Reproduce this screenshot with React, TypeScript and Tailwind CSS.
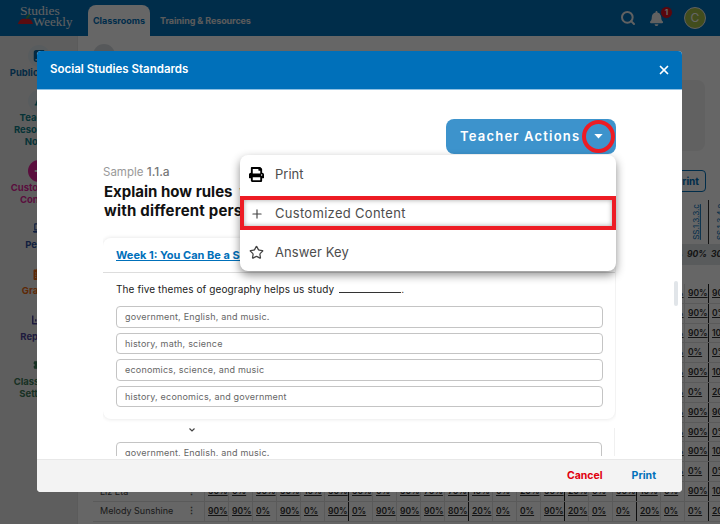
import React from "react";
import { FaPrint, FaBell, FaBook, FaFont, FaPlus, FaLaptop, FaCog, FaChartBar, FaClipboardList } from "react-icons/fa";
import { Plus, Star, X, Search } from "lucide-react";

const F = { fontFamily: "Inter, 'Liberation Sans', sans-serif" };

const fill = (tail: string[]) => [...Array(22 - tail.length).fill("90%"), ...tail];
const rows: { name: string; cells: string[] }[] = [
  ["90%", "90%"], ["90%", "0%"], ["90%", "10%"], ["0%", "0%"], ["90%", "10%"], ["0%", "20%"],
  ["90%", "90%"], ["90%", "0%"], ["90%", "10%"], ["0%", "0%"],
].map((t, i) => ({ name: "Student " + (i + 1), cells: fill(t) }));
rows.push({ name: "Liz Eta", cells: ["90%", "0%", "90%", "90%", "10%", "90%", "90%", "0%", "90%", "70%", "70%", "10%", "0%", "20%", "90%", "20%", "0%", "90%", "10%", "0%", "90%", "10%"] });
rows.push({ name: "Melody Sunshine", cells: ["90%", "90%", "0%", "90%", "0%", "90%", "0%", "90%", "90%", "90%", "80%", "20%", "0%", "0%", "90%", "20%", "0%", "0%", "20%", "0%", "0%", "20%"] });
const thick = new Set([6, 11, 15, 18, 21]);

const side = [
  { icon: <FaBook size={12} />, lines: ["Publications"], color: "text-[#0b6aa8]", mt: "mt-[9px]", circle: "bg-[#dde5ea]" },
  { icon: <FaFont size={10} />, lines: ["Teacher", "Resources", "Notes"], color: "text-[#0f7f88]", mt: "mt-[11px]", circle: "bg-[#dde5ea]" },
  { icon: <FaPlus size={10} />, lines: ["Customized", "Content"], color: "text-[#e0259a]", mt: "mt-[12px]", circle: "bg-[#e0259a] text-white" },
  { icon: <FaLaptop size={12} />, lines: ["Peers"], color: "text-[#2c4f9e]", mt: "mt-[11px]", circle: "" },
  { icon: <FaClipboardList size={12} />, lines: ["Grades"], color: "text-[#e8660f]", mt: "mt-[12px]", circle: "" },
  { icon: <FaChartBar size={12} />, lines: ["Reports"], color: "text-[#4f479c]", mt: "mt-[12px]", circle: "" },
  { icon: <FaCog size={12} />, lines: ["Classroom", "Settings"], color: "text-[#3d7a58]", mt: "mt-[11px]", circle: "" },
];

const answers = ["government, English, and music.", "history, math, science", "economics, science, and music", "history, economics, and government"];

function Option({ text }: { text: string }) {
  return (
    <div className="h-[21.5px] shrink-0 rounded border border-[#c4c4c4] flex items-center px-[8px] text-[9px] tracking-[0.2px] text-[#666]">
      {text}
    </div>
  );
}

export default function App() {
  return (
    <div style={F} className="relative w-[720px] h-[524px] overflow-hidden bg-white">
      {/* Page behind the dialog */}
      <header className="h-9 bg-[#0070ba] flex items-end pl-[18px]">
        <div className="relative w-[70px] h-[30px] self-center text-[#f2f2f2] leading-none" style={{ fontFamily: "'Liberation Serif', serif" }}>
          <span className="absolute left-[2px] top-[1px] text-[13.5px]">Studies</span>
          <span className="absolute left-[15px] top-[12px] text-[13px]">Weekly</span>
          <svg className="absolute left-0 top-[11px]" width="16" height="12" viewBox="0 0 16 12">
            <path d="M0 10C1 5 5 4 8 5c3-1 6 0 7 5Z" fill="#e0202a" />
            <path d="M8 5C8 3 9 1 12 0c0 2-1 4-4 5Z" fill="#4b9a3c" />
          </svg>
        </div>
        <div className="h-[31px] w-[62px] rounded-t-lg bg-white flex items-center justify-center text-[9px] font-bold text-[#0070ba]">
          Classrooms
        </div>
        <div className="ml-[10px] h-[31px] flex items-center text-[9px] font-bold text-[#e3e3e3] tracking-[-0.1px]">
          Training &amp; Resources
        </div>
        <div className="ml-auto self-center flex items-center pr-[14px]">
          <Search size={16} strokeWidth={3} className="text-[#f2f2f2] mr-[13px]" />
          <div className="relative mr-[20px]">
            <FaBell size={15} className="text-[#f2f2f2]" />
            <span className="absolute -top-[5px] -right-[9px] w-[13px] h-[13px] rounded-full bg-[#e0101f] border border-[#0070ba] text-white text-[8px] font-bold flex items-center justify-center">1</span>
          </div>
          <div className="w-[22px] h-[22px] rounded-full bg-[#a5c04a] border border-[#f0f0f0] flex items-center justify-center text-[12px] text-white">C</div>
        </div>
      </header>

      <div className="flex h-[488px]">
        <aside className="w-[78px] shrink-0 bg-[#ececec] border-r border-[#e4e4e4] flex flex-col items-center">
          {side.map((s) => (
            <div key={s.lines[0]} className={`flex flex-col items-center ${s.mt} ${s.color}`}>
              <div className={`w-[22px] h-[22px] rounded-full flex items-center justify-center ${s.circle}`}>{s.icon}</div>
              {s.lines.map((l) => (
                <div key={l} className="text-[9.5px] font-bold leading-[12px] whitespace-nowrap">{l}</div>
              ))}
            </div>
          ))}
        </aside>
        <main className="flex-1 min-w-0 bg-white pl-[15px]">
          <div className="flex items-start h-[134px] pt-[8px]">
            <div className="w-[22px] h-[22px] rounded-full bg-[#d8dde2]" />
            <div className="ml-auto mt-[36px] w-[590px] h-[71px] mr-[15px] rounded-lg bg-[#f2f2f2]" />
          </div>
          <div className="flex justify-end h-[30px] pr-[14px]">
            <div className="h-[22px] w-[58px] rounded border border-[#0070ba] text-[#0070ba] text-[10px] font-bold flex items-center justify-end pr-[6px]">Print</div>
          </div>
          {/* Score table */}
          <div className="w-[640px] text-[#333]">
            <div className="flex h-[44px] ml-[111px]">
              {Array.from({ length: 22 }, (_, i) => (
                <div key={i} className={`w-6 shrink-0 flex items-center justify-center ${thick.has(i) ? "border-l border-l-[#333]" : ""}`}>
                  <span className="block -rotate-90 text-[8px] whitespace-nowrap underline text-[#0070ba]">{i === 20 ? "SS.1.3.3.c" : i === 21 ? "SS.1.3.4.e" : "SS.1.1.1.a"}</span>
                </div>
              ))}
            </div>
            <div className="flex h-[21px] ml-[111px] bg-[#dfe3e6]">
              {Array.from({ length: 22 }, (_, i) => (
                <div key={i} className="w-6 shrink-0 flex items-center pl-[3px] text-[8.5px] font-bold italic">{i === 21 ? "30%" : "90%"}</div>
              ))}
            </div>
            <div className="h-[19px]" />
            {rows.map((r) => (
              <div key={r.name} className="flex h-[19.8px] border-b border-[#e2e2e2]">
                <div className="w-[111px] shrink-0 flex items-center pl-[7px] text-[9px] text-[#444]">
                  <span className="flex-1">{r.name}</span>
                  <span className="pr-[8px] font-bold text-[#555]">⋮</span>
                </div>
                {r.cells.map((c, i) => (
                  <div key={i} className={`w-6 shrink-0 flex items-center pl-[3px] text-[8.5px] font-semibold underline border-l ${thick.has(i) ? "border-l-[#222]" : "border-l-[#e2e2e2]"}`}>{c}</div>
                ))}
              </div>
            ))}
          </div>
        </main>
      </div>

      {/* Dim layer */}
      <div className="absolute inset-0 bg-[rgba(0,0,0,0.6)]" />

      {/* Dialog */}
      <div className="absolute left-[37px] top-[51px] w-[645px] h-[441px] bg-white rounded-[4px] flex flex-col overflow-hidden">
        <div className="h-[39px] shrink-0 bg-[#0070ba] border-b border-[#8fc1e3] flex items-center justify-between pl-[13px] pr-[11px] text-white">
          <span className="text-[11.5px] font-semibold">Social Studies Standards</span>
          <X size={14} strokeWidth={3} />
        </div>
        <div className="relative flex-1 min-h-0 px-[66px] overflow-hidden">
          <div className="h-[366px] overflow-hidden">
            <div className="pt-[75px] text-[11.5px] leading-[14px] text-[#999]">
              Sample <span className="text-[12px] font-medium text-[#777]">1.1.a</span>
            </div>
            <div className="mt-[3px] pl-[1px] text-[15px] font-bold leading-[19px] text-[#111] whitespace-nowrap">
              <div>Explain how rules&nbsp;&nbsp;work</div>
              <div className="tracking-[0.2px]">with different perspectives</div>
            </div>
            <div className="mt-[18px] w-[512px] rounded-lg shadow-[0_0_4px_rgba(0,0,0,0.12)] pb-[12px]">
              <div className="h-[35px] border-b border-[#ddd] flex items-center pl-[13px] text-[11px] font-bold underline text-[#0070ba]">
                Week 1: You Can Be a Social Scientist
              </div>
              <div className="h-[33px] flex items-center pl-[13px] text-[10px] tracking-[0.1px] text-[#222]">
                The five themes of geography helps us study
                <span className="inline-block w-[62px] ml-[5px] mt-[6px] border-b border-[#333]" />
                <span>.</span>
              </div>
              <div className="ml-[13px] mr-[12px] flex flex-col gap-[5px]">
                {answers.map((a) => <Option key={a} text={a} />)}
              </div>
            </div>
            <div className="mt-[9px] w-[512px] border-r border-[#f0f0f0] pl-[86px] h-[14px]">
              <svg width="6" height="4" viewBox="0 0 6 4" className="block"><path d="M0.5 0.5 3 3l2.5-2.5" fill="none" stroke="#444" strokeWidth="1.2" /></svg>
            </div>
            <div className="w-[512px] border-r border-[#f0f0f0]">
              <div className="ml-[13px] mr-[12px]"><Option text={answers[0]} /></div>
            </div>
          </div>
          <div className="absolute right-[4px] top-[191px] w-[4px] h-[25px] rounded bg-[#e1e5e9]" />

          {/* Teacher Actions */}
          <div className="absolute left-[409px] top-[29px] w-[170px] h-[35px] rounded-lg bg-[#3d93cc] flex items-center pl-[14px] text-white text-[13px] font-semibold tracking-[1.2px]">
            Teacher Actions
          </div>
          <div className="absolute left-[545px] top-[30px] w-[33px] h-[33px] rounded-full border-[4px] border-[#ed1c24] flex items-center justify-center">
            <svg width="9" height="5" viewBox="0 0 10 6"><path d="M0 0h10L5 5.5Z" fill="#fff" /></svg>
          </div>

          {/* Menu */}
          <div className="absolute left-[203px] top-[65px] w-[376px] h-[116px] bg-white rounded-lg shadow-[0_4px_10px_rgba(0,0,0,0.45)] flex flex-col text-[13px] text-[#4d4d4d]">
            <div className="flex-1 flex items-center pl-[9px] pt-[1px]">
              <FaPrint size={15} className="text-black" />
              <span className="ml-[11px]">Print</span>
            </div>
            <div className="flex-1 flex items-center pl-[10px] pt-[2px] tracking-[0.3px]">
              <Plus size={14} className="text-[#444]" />
              <span className="ml-[11px]">Customized Content</span>
            </div>
            <div className="flex-1 flex items-center pl-[9px] pt-[2px] tracking-[0.1px]">
              <Star size={15} strokeWidth={2} className="text-[#444]" />
              <span className="ml-[11px]">Answer Key</span>
            </div>
          </div>
          <div className="absolute left-[203px] top-[106px] w-[376px] h-[34px] border-[4px] border-[#ed1c24] shadow-[inset_0_0_5px_rgba(0,0,0,0.35)]" />
        </div>
        <div className="h-[33px] shrink-0 bg-[#f3f3f3] border-t border-[#e8e8e8] flex items-center justify-end pr-[26px] gap-[29px] text-[10.5px] font-bold">
          <span className="text-[#e0000f]">Cancel</span>
          <span className="text-[#0070ba]">Print</span>
        </div>
      </div>
    </div>
  );
}
